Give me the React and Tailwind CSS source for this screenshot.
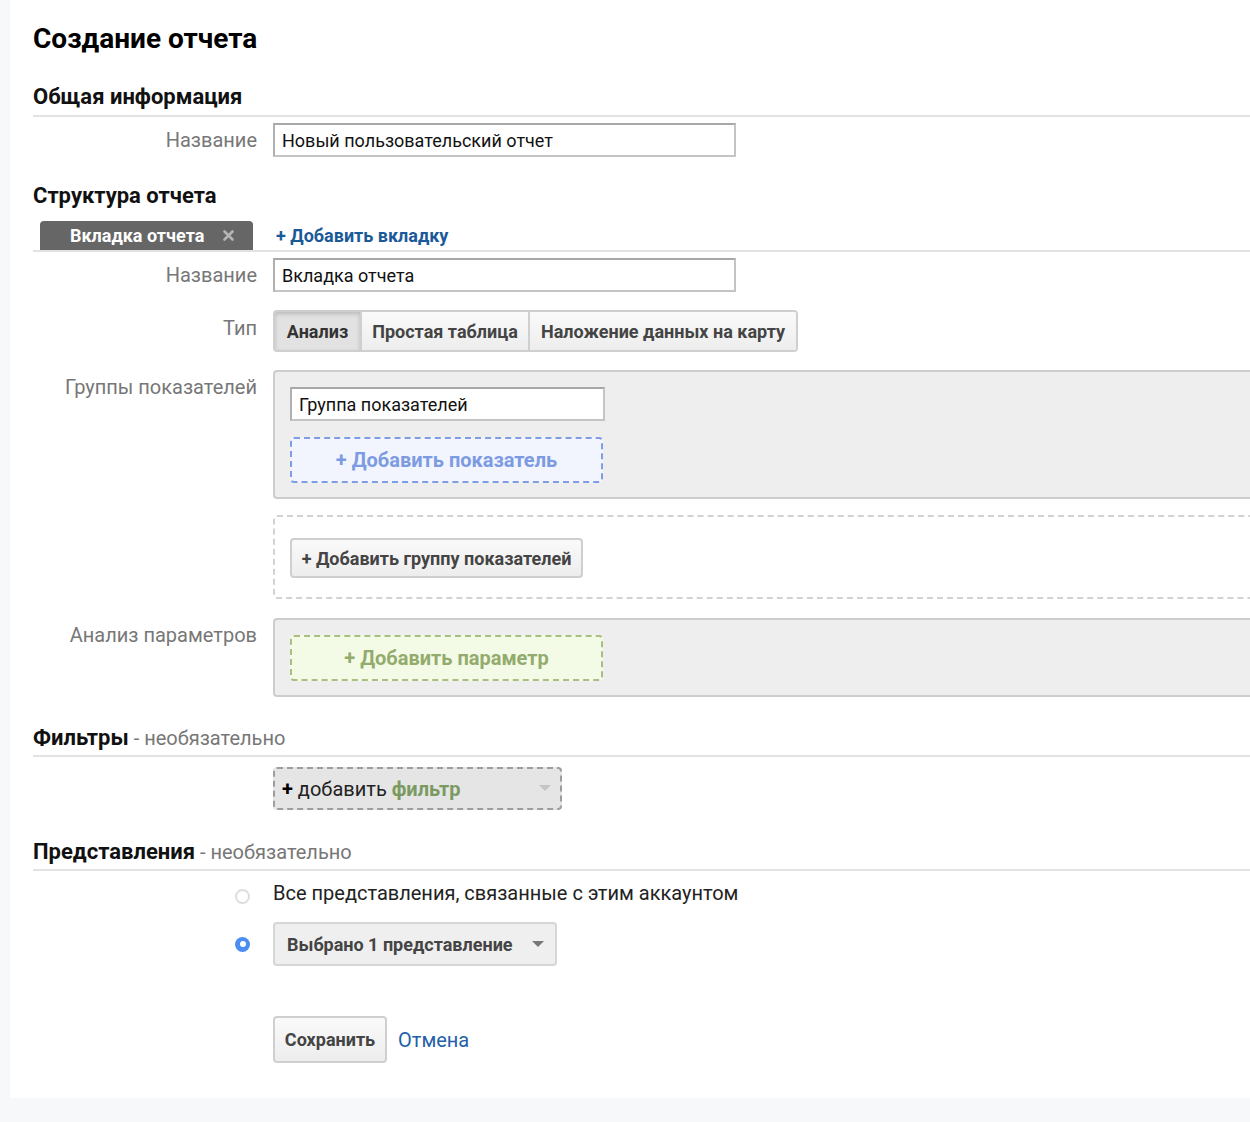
import React from "react";

const Label = ({ children, className = "" }) => (
  <div
    className={`w-[224px] shrink-0 text-right text-[20px] leading-[24px] text-[#777] ${className}`}
  >
    {children}
  </div>
);

const Heading = ({ children, note, className = "" }) => (
  <div
    className={`border-b-2 border-[#e2e2e2] pb-[5px] text-[22px] leading-[24px] ${className}`}
  >
    <span className="font-bold text-[#111]">{children}</span>
    {note && (
      <span className="text-[20px] text-[#777]"> - {note}</span>
    )}
  </div>
);

const TextInput = ({ value, className = "" }) => (
  <div
    className={`flex h-[34px] items-center border-2 border-[#c4c4c4] border-t-[#a8a8a8] border-l-[#b0b0b0] bg-white px-[7px] text-[18px] text-[#111] ${className}`}
  >
    {value}
  </div>
);

const Caret = ({ color }) => (
  <svg width="12" height="7" viewBox="0 0 12 7">
    <path d="M0 0 L12 0 L6 6 Z" fill={color} />
  </svg>
);

export default function App() {
  return (
    <div
      className="h-[1122px] overflow-hidden bg-[#f7f8fa]"
      style={{ fontFamily: "Roboto, 'Liberation Sans', sans-serif" }}
    >
      <div className="ml-[10px] w-[1300px] bg-white pl-[23px] pt-[24px] pb-[35px]">
        <h1 className="text-[28px] font-bold leading-[30px] text-black">
          Создание отчета
        </h1>

        <Heading className="mt-[31px] pb-[6px]">Общая информация</Heading>
        <div className="mt-[6px] flex gap-4">
          <Label className="leading-[34px]">Название</Label>
          <TextInput value="Новый пользовательский отчет" className="w-[463px]" />
        </div>

        <div className="mt-[27px] text-[22px] font-bold leading-[24px] text-[#111]">
          Структура отчета
        </div>
        <div className="mt-[13px] flex items-end border-b-2 border-[#e2e2e2]">
          <div className="ml-[7px] flex h-[29px] w-[213px] items-center rounded-t-[4px] bg-[#666] pl-[30px] text-[18px] font-bold text-white">
            Вкладка отчета
            <svg className="ml-[19px]" width="11" height="11" viewBox="0 0 11 11">
              <path
                d="M1.5 1.5 L9.5 9.5 M9.5 1.5 L1.5 9.5"
                stroke="#b5b5b5"
                strokeWidth="2.6"
                strokeLinecap="round"
              />
            </svg>
          </div>
          <a className="ml-[23px] text-[18px] font-bold leading-[29px] text-[#1b5a98]">
            + Добавить вкладку
          </a>
        </div>

        <div className="mt-[6px] flex gap-4">
          <Label className="leading-[34px]">Название</Label>
          <TextInput value="Вкладка отчета" className="w-[463px]" />
        </div>

        <div className="mt-[18px] flex gap-4">
          <Label className="pt-[6px]">Тип</Label>
          <div className="flex h-[42px] overflow-hidden rounded-[4px] border-2 border-[#cfcfcf] text-[18px] font-bold text-[#444]">
            <div className="flex w-[85px] items-center justify-center bg-[#e2e2e2] shadow-[inset_0_2px_4px_rgba(0,0,0,0.18)] text-[#333]">
              Анализ
            </div>
            <div className="flex w-[168px] items-center justify-center border-l-2 border-[#cfcfcf] bg-gradient-to-b from-[#fafafa] to-[#ededed]">
              Простая таблица
            </div>
            <div className="flex w-[268px] items-center justify-center border-l-2 border-[#cfcfcf] bg-gradient-to-b from-[#fafafa] to-[#ededed]">
              Наложение данных на карту
            </div>
          </div>
        </div>

        <div className="mt-[18px] flex gap-4">
          <Label className="pt-[5px]">Группы показателей</Label>
          <div className="flex-1 rounded-l-[4px] border-2 border-r-0 border-[#cdcdcd] bg-[#eee] pl-[15px] pt-[15px] pb-[14px]">
            <TextInput value="Группа показателей" className="w-[315px]" />
            <div className="mt-[16px] flex h-[46px] w-[313px] items-center justify-center rounded-[4px] border-2 border-dashed border-[#7f9de6] bg-[#f2f5fd] text-[20px] font-bold text-[#7d9be2]">
              + Добавить показатель
            </div>
          </div>
        </div>

        <div className="mt-[16px] flex gap-4">
          <div className="w-[224px] shrink-0" />
          <div className="flex-1 rounded-l-[4px] border-2 border-r-0 border-dashed border-[#d2d2d2] pl-[15px] pt-[21px] pb-[19px]">
            <div className="flex h-[40px] w-[293px] items-center justify-center rounded-[4px] border-2 border-[#cfcfcf] bg-gradient-to-b from-[#fafafa] to-[#ededed] text-[18px] font-bold text-[#444]">
              + Добавить группу показателей
            </div>
          </div>
        </div>

        <div className="mt-[19px] flex gap-4">
          <Label className="pt-[5px]">Анализ параметров</Label>
          <div className="flex-1 rounded-l-[4px] border-2 border-r-0 border-[#cdcdcd] bg-[#eee] pl-[15px] pt-[15px] pb-[14px]">
            <div className="flex h-[46px] w-[313px] items-center justify-center rounded-[4px] border-2 border-dashed border-[#abbe82] bg-[#f3fbe7] text-[20px] font-bold text-[#93ab6c]">
              + Добавить параметр
            </div>
          </div>
        </div>

        <Heading note="необязательно" className="mt-[29px]">
          Фильтры
        </Heading>
        <div className="mt-[10px] flex gap-4">
          <div className="w-[224px] shrink-0" />
          <div className="flex h-[43px] w-[289px] items-center justify-between rounded-[4px] border-2 border-dashed border-[#9d9d9d] bg-[#e5e5e5] pl-[7px] pr-[9px] text-[20px] text-[#222]">
            <span>
              <span className="font-bold text-black">+</span> добавить{" "}
              <span className="font-bold text-[#7b9a62]">фильтр</span>
            </span>
            <Caret color="#c4c4c4" />
          </div>
        </div>

        <Heading note="необязательно" className="mt-[30px]">
          Представления
        </Heading>
        <div className="mt-[10px] flex gap-4">
          <div className="flex w-[224px] shrink-0 justify-end pr-[7px] pt-[8px]">
            <div className="h-[15px] w-[15px] rounded-full border-2 border-[#ddd] bg-white" />
          </div>
          <div className="text-[20px] leading-[24px] text-[#222]">
            Все представления, связанные с этим аккаунтом
          </div>
        </div>
        <div className="mt-[17px] flex h-[44px] items-center gap-4">
          <div className="flex w-[224px] shrink-0 justify-end pr-[7px]">
            <div className="flex h-[15px] w-[15px] items-center justify-center rounded-full bg-[#4b8df0]">
              <div className="h-[6px] w-[6px] rounded-full bg-white" />
            </div>
          </div>
          <div className="flex h-[44px] w-[284px] items-center justify-between rounded-[4px] border-2 border-[#d6d6d6] bg-[#efefef] pl-[12px] pr-[11px] text-[18px] font-bold text-[#444]">
            Выбрано 1 представление
            <Caret color="#777" />
          </div>
        </div>

        <div className="mt-[50px] flex h-[47px] items-center gap-4">
          <div className="w-[224px] shrink-0" />
          <div className="flex h-[47px] w-[114px] items-center justify-center rounded-[4px] border-2 border-[#cfcfcf] bg-gradient-to-b from-[#fafafa] to-[#ededed] text-[18px] font-bold text-[#444]">
            Сохранить
          </div>
          <a className="-ml-[5px] text-[20px] text-[#2261a8]">Отмена</a>
        </div>
      </div>
    </div>
  );
}
